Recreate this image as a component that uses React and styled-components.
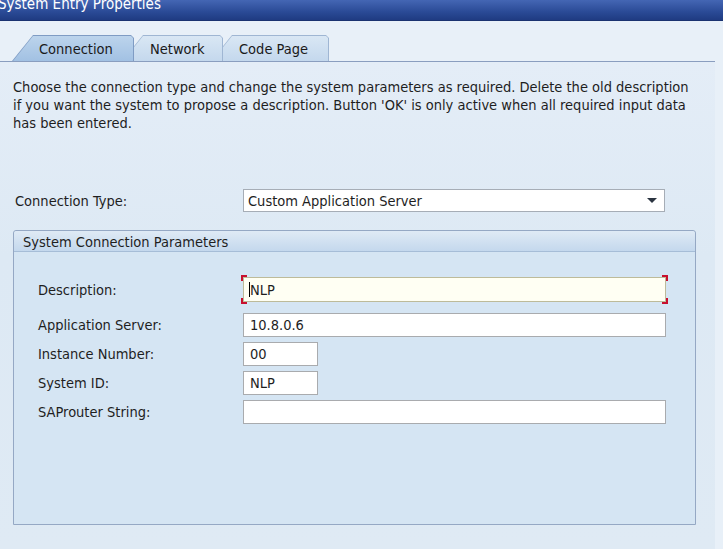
import React from 'react';
import styled, { createGlobalStyle } from 'styled-components';

const GlobalStyle = createGlobalStyle`
    html, body {
        margin: 0;
        padding: 0;
        background: #e8f0f8;
    }
    body {
        font-family: "DejaVu Sans Condensed", "DejaVu Sans", Tahoma, sans-serif;
        font-size: 14.5px;
        color: #1e1e1e;
    }
`;

const Window = styled.div`
    width: 723px;
    height: 549px;
    overflow: hidden;
    display: flex;
    flex-direction: column;
    background: #e8f0f8;
`;

const TitleBar = styled.div`
    height: 21px;
    flex: none;
    overflow: hidden;
    background: linear-gradient(#4466b4, #2a4a96 60%, #1f3b82);
    border-bottom: 1px solid #1a3270;
    box-sizing: border-box;
`;

const TitleText = styled.div`
    color: #ffffff;
    font-size: 15px;
    line-height: 15px;
    margin: -3px 0 0 -2px;
    white-space: nowrap;
`;

const Panel = styled.div`
    width: 715px;
    flex: 1;
    display: flex;
    flex-direction: column;
`;

const TabStrip = styled.div`
    height: 41px;
    flex: none;
    box-sizing: border-box;
    padding: 15px 0 0 12px;
    display: flex;
    align-items: flex-end;
    border-bottom: 1px solid #8a9ebf;
    box-shadow: 0 1px 0 #f4f8fc;
`;

const Tab = styled.div`
    position: relative;
    width: ${p => p.$width}px;
    height: 26px;
    margin-left: ${p => (p.$first ? 0 : -12)}px;
    z-index: ${p => p.$z};
    box-sizing: border-box;
    padding: 1px 0 0 ${p => p.$pad}px;
    display: flex;
    align-items: center;
    clip-path: polygon(21px 0, calc(100% - 3px) 0, 100% 3px, 100% 100%, 0 100%);
    background: ${p => (p.$active ? '#7f9cc4' : '#9fb6d3')};
    color: #1a1a1a;
    white-space: nowrap;

    &::before {
        content: '';
        position: absolute;
        inset: 1px 1px 0 1px;
        clip-path: polygon(20px 0, calc(100% - 2px) 0, 100% 2px, 100% 100%, 0 100%);
        background: ${p => (p.$active
            ? 'linear-gradient(#bcd4ec, #a2c1e3)'
            : 'linear-gradient(#d9e7f4, #c4d8ed)')};
        z-index: -1;
    }
`;

const Content = styled.div`
    flex: 1;
    padding: 16px 0 0 13px;
    background: linear-gradient(#e4edf7, #dde9f4 40%, #dfeaf4);
`;

const Intro = styled.p`
    margin: 0;
    line-height: 18px;
    white-space: nowrap;
`;

const TypeRow = styled.div`
    display: grid;
    grid-template-columns: 228px 422px;
    align-items: center;
    margin: 57px 0 0 2px;
`;

const Label = styled.span`
    white-space: nowrap;
`;

const Select = styled.div`
    height: 23px;
    box-sizing: border-box;
    border: 1px solid #a6adb6;
    background: #ffffff;
    display: flex;
    align-items: center;
    justify-content: space-between;
    padding: 0 6px 0 4px;
`;

const Arrow = styled.span`
    width: 0;
    height: 0;
    border-left: 5px solid transparent;
    border-right: 5px solid transparent;
    border-top: 5px solid #2b3440;
    margin-right: 1px;
`;

const Group = styled.div`
    margin-top: 18px;
    width: 683px;
    height: 295px;
    box-sizing: border-box;
    border: 1px solid #95a8c4;
    border-radius: 3px 3px 0 0;
    background: #d5e5f3;
    display: flex;
    flex-direction: column;
`;

const GroupHeader = styled.div`
    height: 21px;
    flex: none;
    box-sizing: border-box;
    padding: 1px 0 0 9px;
    display: flex;
    align-items: center;
    background: linear-gradient(#dfeaf5, #c4d8ed);
    border-bottom: 1px solid #a6bdd7;
    border-radius: 3px 3px 0 0;
`;

const Fields = styled.div`
    display: grid;
    grid-template-columns: 205px auto;
    justify-content: start;
    align-items: center;
    row-gap: 5px;
    padding: 25px 0 0 24px;
`;

const red = 'linear-gradient(#c8102e, #c8102e)';

const Input = styled.div`
    position: relative;
    width: ${p => p.$width}px;
    height: ${p => (p.$required ? 25 : 24)}px;
    box-sizing: border-box;
    border: 1px solid ${p => (p.$required ? '#bdbb9a' : '#a9abae')};
    background: ${p => (p.$required ? '#fffff3' : '#ffffff')};
    display: flex;
    align-items: center;
    padding-left: 6px;
    margin-bottom: ${p => (p.$required ? 6 : 0)}px;
    white-space: nowrap;

    ${p => p.$required && `
        &::after {
            content: '';
            position: absolute;
            inset: -3px;
            background:
                ${red} left top / 6px 2px no-repeat,
                ${red} left top / 2px 6px no-repeat,
                ${red} right top / 6px 2px no-repeat,
                ${red} right top / 2px 6px no-repeat,
                ${red} left bottom / 6px 2px no-repeat,
                ${red} left bottom / 2px 6px no-repeat,
                ${red} right bottom / 6px 2px no-repeat,
                ${red} right bottom / 2px 6px no-repeat;
        }
    `}
`;

const Caret = styled.span`
    display: inline-block;
    width: 1px;
    height: 15px;
    background: #000000;
    margin: 0 0 0 -1px;
`;

const fields = [
    { label: 'Description:', value: 'NLP', width: 423, required: true },
    { label: 'Application Server:', value: '10.8.0.6', width: 423 },
    { label: 'Instance Number:', value: '00', width: 75 },
    { label: 'System ID:', value: 'NLP', width: 75 },
    { label: 'SAProuter String:', value: '', width: 423 },
];

export default function App() {
    return (
        <Window>
            <GlobalStyle />
            <TitleBar>
                <TitleText>System Entry Properties</TitleText>
            </TitleBar>
            <Panel>
                <TabStrip>
                    <Tab $first $active $z={3} $width={122} $pad={27}>Connection</Tab>
                    <Tab $z={2} $width={101} $pad={28}>Network</Tab>
                    <Tab $z={1} $width={118} $pad={28}>Code Page</Tab>
                </TabStrip>
                <Content>
                    <Intro>
                        Choose the connection type and change the system parameters as required. Delete the old description<br />
                        if you want the system to propose a description. Button 'OK' is only active when all required input data<br />
                        has been entered.
                    </Intro>
                    <TypeRow>
                        <Label>Connection Type:</Label>
                        <Select>
                            <span>Custom Application Server</span>
                            <Arrow />
                        </Select>
                    </TypeRow>
                    <Group>
                        <GroupHeader>System Connection Parameters</GroupHeader>
                        <Fields>
                            {fields.map(f => (
                                <React.Fragment key={f.label}>
                                    <Label style={{ marginBottom: f.required ? 6 : 0 }}>{f.label}</Label>
                                    <Input $width={f.width} $required={f.required}>
                                        {f.required && <Caret />}
                                        {f.value}
                                    </Input>
                                </React.Fragment>
                            ))}
                        </Fields>
                    </Group>
                </Content>
            </Panel>
        </Window>
    );
}
